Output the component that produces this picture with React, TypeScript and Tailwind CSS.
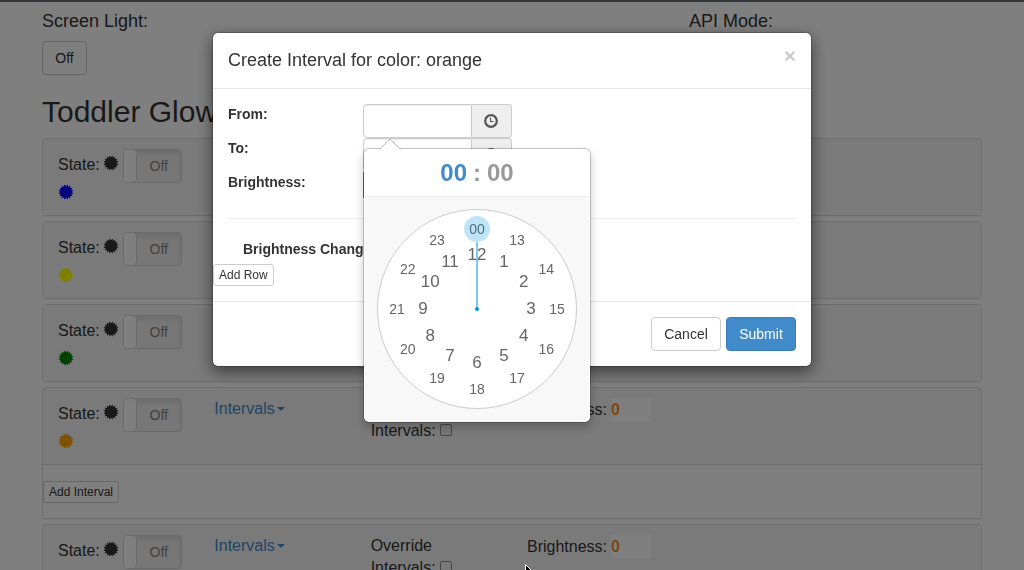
import { useState } from "react";

const font = "font-['Liberation_Sans',Arial,sans-serif]";

const burst = Array.from({ length: 32 }, (_, i) => {
  const angle = ((i + 1) * Math.PI) / 16;
  const radius = i % 2 === 0 ? 7.7 : 5.7;
  return `${(8 + radius * Math.sin(angle)).toFixed(2)},${(8 - radius * Math.cos(angle)).toFixed(2)}`;
}).join(" ");

function Certificate({ className = "" }: { className?: string }) {
  return (
    <svg viewBox="0 0 16 16" className={`inline-block size-4 fill-current ${className}`} aria-hidden="true">
      <polygon points={burst} />
    </svg>
  );
}

function ClockIcon() {
  return (
    <svg viewBox="0 0 14 14" className="size-3.5" fill="none" stroke="currentColor" aria-hidden="true">
      <circle cx="7" cy="7" r="5.8" strokeWidth="2.2" />
      <path d="M6.5 3.5V7.5H9.5" strokeWidth="1.1" />
    </svg>
  );
}

function Toggle({ label }: { label: string }) {
  return (
    <button
      type="button"
      aria-label={label}
      className="flex h-[34px] w-[59px] overflow-hidden rounded border border-[#d6d6d6] bg-[#eee] text-sm text-[#858585] shadow-[inset_0_3px_5px_rgba(0,0,0,0.1)]"
    >
      <span className="h-full w-[13px] rounded-r border-r border-[#d6d6d6] bg-white" />
      <span className="flex h-full flex-1 items-center justify-center">Off</span>
    </button>
  );
}

type Lamp = { name: string; color: string; intervals?: boolean; open?: boolean };

const lamps: Lamp[] = [
  { name: "blue", color: "text-[#0000ff]" },
  { name: "yellow", color: "text-[#ffff00]" },
  { name: "green", color: "text-[#008000]" },
  { name: "orange", color: "text-[#ffa500]", intervals: true, open: true },
  { name: "red", color: "text-[#ff0000]", intervals: true },
];

function LampPanel({ lamp }: { lamp: Lamp }) {
  return (
    <section className="mb-[5px] rounded border border-[#ddd] bg-white shadow-[0_1px_1px_rgba(0,0,0,0.05)]">
      <div className="grid grid-cols-6 rounded-t bg-[#f5f5f5] py-2.5 text-base leading-[22px] text-[#333]">
        <div className="px-[15px]">
          <div className="flex whitespace-nowrap">
            <span className="pt-[5px]">State:</span>
            <Certificate className="mt-1.5 ml-[3px] shrink-0" />
            <span className="ml-1 shrink-0">
              <Toggle label={`State of ${lamp.name}`} />
            </span>
          </div>
          <div className="flex h-[22px] items-start pt-px">
            <Certificate className={lamp.color} />
          </div>
        </div>
        {lamp.intervals && (
          <>
            <div className="px-[15px]">
              <a href="#intervals" className="inline-flex items-center text-[#428bca]">
                Intervals
                <span className="ml-0.5 h-0 w-0 shrink-0 border-x-4 border-t-4 border-x-transparent border-t-current" />
              </a>
            </div>
            <div className="px-[15px]">
              <label>
                Override Intervals:
                <input
                  type="checkbox"
                  className="ml-1 size-3 appearance-none rounded-xs border border-[#8a8a8a] bg-[#f0f0f0]"
                />
              </label>
            </div>
            <div className="px-[15px]">
              <label className="flex items-center gap-1">
                Brightness:
                <input
                  type="text"
                  defaultValue="0"
                  className="h-6 w-10 shrink-0 bg-white font-bold text-[#f6931f]"
                />
              </label>
            </div>
          </>
        )}
      </div>
      {lamp.open && (
        <div className="border-t border-[#ddd] pt-4 pb-[15px]">
          <button
            type="button"
            className="block h-[22px] rounded-[3px] border border-[#ccc] bg-white px-[5px] text-xs leading-[18px] text-[#333]"
          >
            Add Interval
          </button>
        </div>
      )}
    </section>
  );
}

function ClockFace() {
  const hours = Array.from({ length: 24 }, (_, hour) => {
    const outer = hour === 0 || hour > 12;
    const radius = outer ? 80 : 54;
    const angle = (hour * Math.PI) / 6;
    return { hour, outer, x: 99 + radius * Math.sin(angle), y: 99 - radius * Math.cos(angle) };
  });
  return (
    <div className="relative size-[200px] rounded-full border border-[#ccc] bg-white text-[#666]">
      {hours.map(({ hour, outer, x, y }) => (
        <button
          key={hour}
          type="button"
          className={`absolute flex size-[26px] -translate-1/2 items-center justify-center rounded-full ${outer ? "text-sm" : "text-[17px]"}`}
          style={{ left: x, top: y }}
        >
          {hour === 0 ? "00" : hour}
        </button>
      ))}
      <svg viewBox="0 0 198 198" className="pointer-events-none absolute inset-0" aria-hidden="true">
        <line x1="99" y1="99" x2="99" y2="32" stroke="#0095dd" strokeOpacity="0.5" strokeWidth="2" />
        <circle cx="99" cy="19" r="13" fill="#0095dd" fillOpacity="0.25" />
        <circle cx="99" cy="99" r="2" fill="#0095dd" />
      </svg>
    </div>
  );
}

function ClockPopover() {
  return (
    <div className="absolute top-11 left-0 z-10 rounded-md border border-black/20 bg-white bg-clip-padding p-px pb-0 shadow-[0_5px_10px_rgba(0,0,0,0.2)]">
      <svg viewBox="0 0 22 12" className="absolute -top-[11px] left-[15px] h-3 w-[22px]" aria-hidden="true">
        <path d="M0 12L11 1L22 12Z" fill="#fff" />
        <path d="M0.5 11.5L11 1L21.5 11.5" fill="none" stroke="#bbb" />
      </svg>
      <div className="flex h-[47px] items-center justify-center gap-1.5 border-b border-[#ebebeb] text-2xl font-bold text-[#999]">
        <span className="text-[#428bca]">00</span>
        <span>:</span>
        <span>00</span>
      </div>
      <div className="rounded-b-md bg-[#f8f8f8] p-3 pb-[13px]">
        <ClockFace />
      </div>
    </div>
  );
}

function TimeField({ id, children }: { id: string; children?: React.ReactNode }) {
  return (
    <div className="relative flex h-[34px] w-[149px]">
      <input
        id={id}
        type="text"
        className="min-w-0 flex-1 rounded-l border border-[#ccc] bg-white px-3 text-sm shadow-[inset_0_1px_1px_rgba(0,0,0,0.075)] outline-none"
      />
      <button
        type="button"
        aria-label="Pick a time"
        className="flex w-10 items-center rounded-r border border-l-0 border-[#ccc] bg-[#eee] px-3 text-[#555]"
      >
        <ClockIcon />
      </button>
      {children}
    </div>
  );
}

function IntervalDialog({ onClose }: { onClose: () => void }) {
  const row = "grid grid-cols-[135px_1fr] items-start";
  const label = "text-sm leading-5 font-bold";
  return (
    <div className="fixed inset-0 flex items-start justify-center bg-black/50 pt-8">
      <div
        role="dialog"
        aria-labelledby="dialog-title"
        className="w-full max-w-[600px] rounded-md border border-black/20 bg-white bg-clip-padding text-[#333] shadow-[0_5px_15px_rgba(0,0,0,0.5)]"
      >
        <header className="flex items-start justify-between border-b border-[#e5e5e5] p-[15px]">
          <h4 id="dialog-title" className="text-lg leading-[25px]">
            Create Interval for color: orange
          </h4>
          <button
            type="button"
            aria-label="Close"
            onClick={onClose}
            className="text-[21px] leading-4 font-bold text-[#ccc]"
          >
            ×
          </button>
        </header>
        <div className="p-[15px]">
          <div className={row}>
            <label htmlFor="from" className={label}>From:</label>
            <TimeField id="from">
              <ClockPopover />
            </TimeField>
          </div>
          <div className={row}>
            <label htmlFor="to" className={label}>To:</label>
            <TimeField id="to" />
          </div>
          <div className={row}>
            <label htmlFor="brightness" className={label}>Brightness:</label>
            <input id="brightness" type="text" className="h-[26px] w-[149px] border border-[#777] bg-white" />
          </div>
          <hr className="my-5 border-[#eee]" />
          <p className="mb-[5px] ml-[15px] text-sm leading-5 font-bold">Brightness Changes:</p>
          <button
            type="button"
            className="-ml-[15px] block h-[22px] rounded-[3px] border border-[#ccc] bg-white px-[5px] text-xs leading-[18px]"
          >
            Add Row
          </button>
        </div>
        <footer className="flex justify-end gap-[5px] border-t border-[#e5e5e5] p-[15px] text-sm">
          <button
            type="button"
            onClick={onClose}
            className="h-[34px] min-w-[70px] rounded border border-[#ccc] bg-white px-3"
          >
            Cancel
          </button>
          <button
            type="button"
            className="h-[34px] min-w-[70px] rounded border border-[#357ebd] bg-[#428bca] px-3 text-white"
          >
            Submit
          </button>
        </footer>
      </div>
    </div>
  );
}

export default function App() {
  const [open, setOpen] = useState(true);
  return (
    <div className={`h-screen overflow-hidden bg-white text-[#333] ${font}`}>
      <div className="h-0.5 bg-[#6d7073]" />
      <main className="mx-auto max-w-[970px] px-[15px] pt-[9px]">
        <div className="grid grid-cols-[647px_1fr]">
          <div>
            <h4 className="mb-2.5 text-lg leading-5">Screen Light:</h4>
            <button
              type="button"
              className="h-[34px] min-w-[45px] rounded border border-[#ccc] bg-white px-3 text-sm"
            >
              Off
            </button>
          </div>
          <h4 className="text-lg leading-5">API Mode:</h4>
        </div>
        <h2 className="mt-5 mb-2.5 text-3xl leading-[33px]">Toddler Glow Clock</h2>
        {lamps.map((lamp) => (
          <LampPanel key={lamp.name} lamp={lamp} />
        ))}
      </main>
      {open && <IntervalDialog onClose={() => setOpen(false)} />}
      <svg
        viewBox="0 0 12 18"
        className="pointer-events-none fixed top-[564px] left-[525px] h-[18px] w-3"
        aria-hidden="true"
      >
        <path d="M0.5 0.5V14L4 11L6.5 16.5L8.5 15.5L6 10.5H10.5Z" fill="#000" stroke="#fff" />
      </svg>
    </div>
  );
}
